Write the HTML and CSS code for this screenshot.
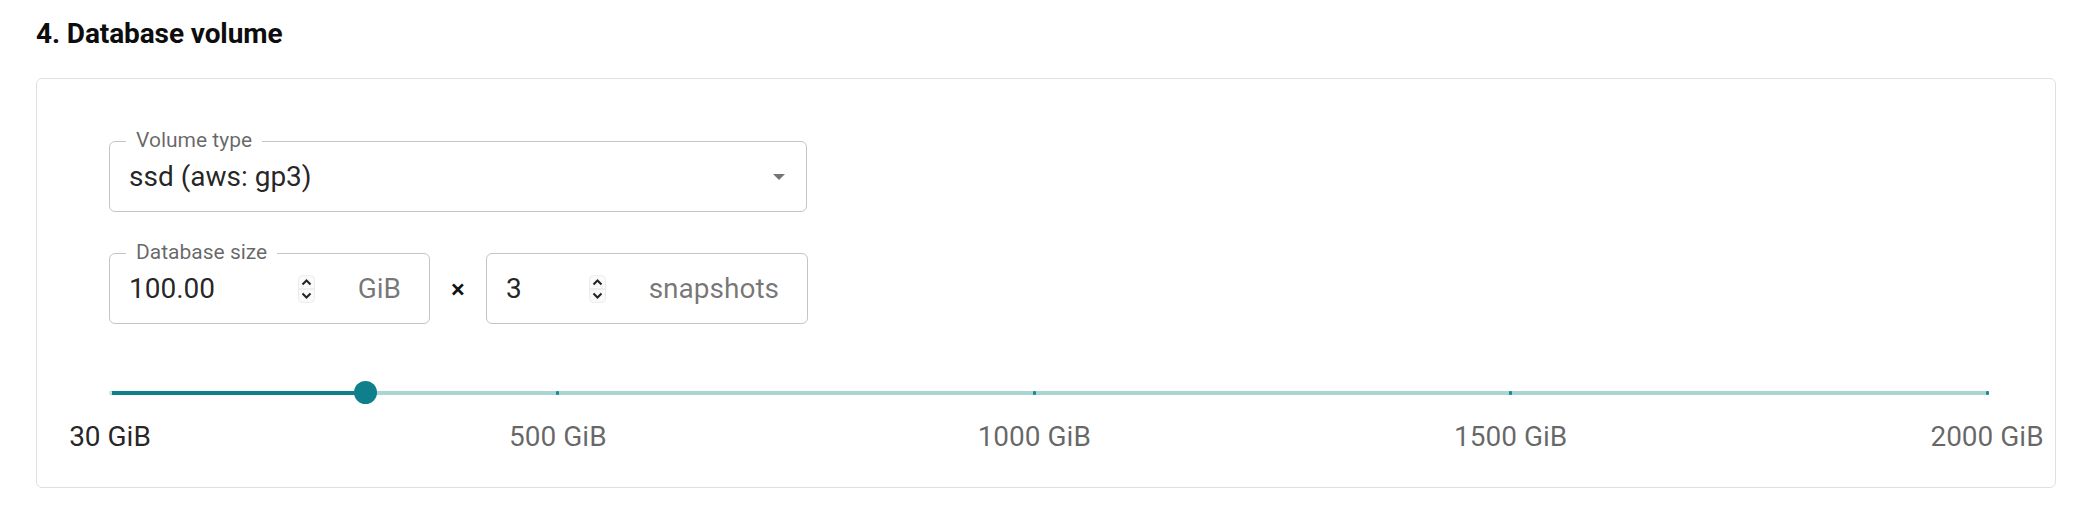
FILE: index.html
```html
<!DOCTYPE html>
<html lang="en">
<head>
<meta charset="utf-8">
<title>Database volume</title>
<link rel="stylesheet" href="styles.css">
</head>
<body>
<div class="page">
  <h2 class="title">4. Database volume</h2>
  <div class="card">
    <div class="field select">
      <span class="label">Volume type</span>
      <span class="value">ssd (aws: gp3)</span>
      <svg class="arrow" width="12" height="6" viewBox="0 0 12 6"><path d="M0 0h12L6 6z" fill="#757575"/></svg>
    </div>
    <div class="row">
      <div class="field num size">
        <span class="label">Database size</span>
        <span class="input"><span class="value">100.00</span><svg class="spin" width="17" height="28" viewBox="0 0 17 28"><rect x="0.5" y="0.5" width="16" height="27" rx="4" fill="#fafafa" stroke="#ececec"/><line x1="1" y1="14" x2="16" y2="14" stroke="#e2e2e2"/><path d="M4.5 9.5l4-4 4 4" fill="none" stroke="#222" stroke-width="2"/><path d="M4.5 18.5l4 4 4-4" fill="none" stroke="#222" stroke-width="2"/></svg></span>
        <span class="adorn">GiB</span>
      </div>
      <span class="times">×</span>
      <div class="field num snaps">
        <span class="input"><span class="value">3</span><svg class="spin" width="17" height="28" viewBox="0 0 17 28"><rect x="0.5" y="0.5" width="16" height="27" rx="4" fill="#fafafa" stroke="#ececec"/><line x1="1" y1="14" x2="16" y2="14" stroke="#e2e2e2"/><path d="M4.5 9.5l4-4 4 4" fill="none" stroke="#222" stroke-width="2"/><path d="M4.5 18.5l4 4 4-4" fill="none" stroke="#222" stroke-width="2"/></svg></span>
        <span class="adorn">snapshots</span>
      </div>
    </div>
    <div class="slider">
      <div class="rail"></div>
      <div class="track" style="width:13.59%"></div>
      <span class="tick on" style="left:0%"></span>
      <span class="tick" style="left:23.86%"></span>
      <span class="tick" style="left:49.24%"></span>
      <span class="tick" style="left:74.62%"></span>
      <span class="tick" style="left:100%"></span>
      <span class="thumb" style="left:13.59%"></span>
      <span class="mark active" style="left:0%">30 GiB</span>
      <span class="mark" style="left:23.86%">500 GiB</span>
      <span class="mark" style="left:49.24%">1000 GiB</span>
      <span class="mark" style="left:74.62%">1500 GiB</span>
      <span class="mark" style="left:100%">2000 GiB</span>
    </div>
  </div>
</div>
</body>
</html>
```
FILE: styles.css
```css
html, body {
  margin: 0;
  padding: 0;
  background: #ffffff;
}
body {
  font-family: Roboto, "Liberation Sans", Arial, sans-serif;
  color: rgba(0, 0, 0, 0.87);
}
.page {
  padding: 18px 34px 0 36px;
}
.title {
  margin: 0;
  font-size: 28px;
  line-height: 32px;
  font-weight: 700;
  color: #0d0d0d;
  letter-spacing: -0.1px;
}
.card {
  margin-top: 28px;
  border: 1px solid #e0e0e0;
  border-radius: 6px;
  padding: 62px 0 34px 72px;
}
.field {
  position: relative;
  box-sizing: border-box;
  height: 71px;
  border: 1.5px solid #c4c4c4;
  border-radius: 6px;
  display: flex;
  align-items: center;
  padding: 0 28px 0 19px;
  font-size: 28px;
  line-height: 40px;
}
.select {
  width: 698px;
  padding-right: 21px;
}
.select .value {
  flex: 1;
}
.arrow {
  display: block;
}
.label {
  position: absolute;
  left: 16px;
  top: -14px;
  padding: 0 10px;
  background: #ffffff;
  font-size: 21px;
  line-height: 24px;
  color: rgba(0, 0, 0, 0.6);
}
.row {
  display: flex;
  align-items: center;
  margin-top: 41px;
}
.size {
  width: 321px;
}
.snaps {
  width: 322px;
}
.input {
  flex: 1;
  display: flex;
  align-items: center;
  justify-content: space-between;
  color: rgba(0, 0, 0, 0.87);
}
.spin {
  display: block;
}
.adorn {
  margin-left: 43px;
  color: rgba(0, 0, 0, 0.54);
}
.times {
  width: 56px;
  text-align: center;
  font-size: 26px;
  font-weight: 500;
  color: #111;
}
.slider {
  position: relative;
  height: 72px;
  margin: 57px 68px 0 1px;
}
.rail {
  position: absolute;
  left: 0;
  right: 0;
  top: 10px;
  height: 4px;
  border-radius: 2px;
  background: #a9d5d2;
}
.track {
  position: absolute;
  left: 0;
  top: 10px;
  height: 4px;
  border-radius: 2px;
  background: #0e7f8b;
}
.tick {
  position: absolute;
  top: 10px;
  width: 3px;
  height: 4px;
  margin-left: -1.5px;
  border-radius: 1px;
  background: #1f8a95;
}
.tick.on {
  background: #cfe7e6;
}
.thumb {
  position: absolute;
  top: 0;
  width: 23px;
  height: 23px;
  margin-left: -11.5px;
  border-radius: 50%;
  background: #0e7f8b;
}
.mark {
  position: absolute;
  top: 40px;
  transform: translateX(-50%);
  white-space: nowrap;
  font-size: 28px;
  line-height: 32px;
  color: rgba(0, 0, 0, 0.6);
}
.mark.active {
  color: rgba(0, 0, 0, 0.87);
}
```
